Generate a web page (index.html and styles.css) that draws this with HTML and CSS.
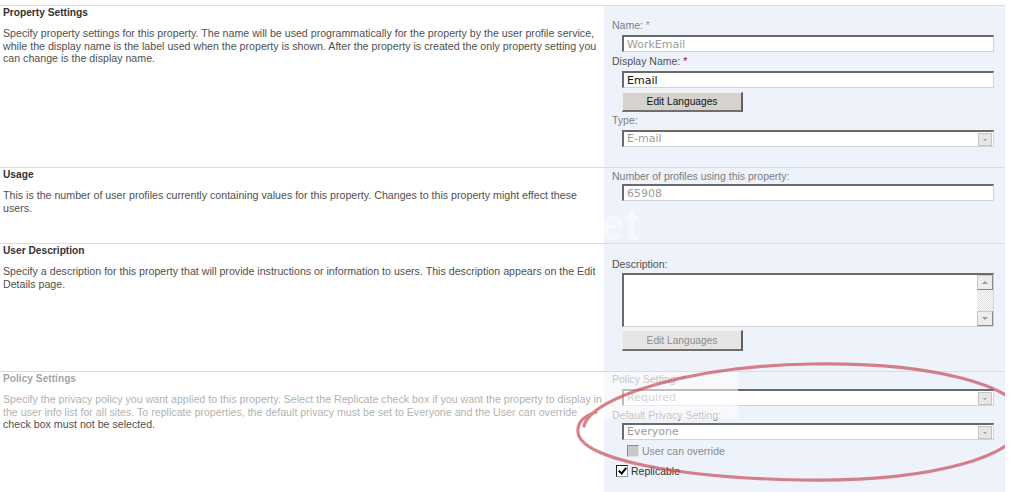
FILE: index.html
```html
<!DOCTYPE html>
<html>
<head>
    <title>Edit User Profile Property</title>
    <link rel="stylesheet" href="styles.css">
</head>
<body>
<div class="page">

    <!-- Property settings -->
    <section class="row">
        <div class="info">
            <h3>Property Settings</h3>
            <p>Specify property settings for this property. The name will be used programmatically for the property by the user profile service, while the display name is the label used when the property is shown. After the property is created the only property setting you can change is the display name.</p>
        </div>
        <div class="fields first">
            <label class="cap">Name: <span class="req off">*</span></label>
            <input class="box" type="text" value="WorkEmail" readonly>
            <label class="cap dark gap">Display Name: <span class="req">*</span></label>
            <input class="box live" type="text" value="Email">
            <button class="btn">Edit Languages</button>
            <label class="cap gap-sm">Type:</label>
            <div class="box select"><span>E-mail</span><i class="drop"></i></div>
        </div>
    </section>

    <!-- Usage -->
    <section class="row">
        <div class="info">
            <h3>Usage</h3>
            <p>This is the number of user profiles currently containing values for this property. Changes to this property might effect these users.</p>
        </div>
        <div class="fields usage">
            <label class="cap">Number of profiles using this property:</label>
            <input class="box tight" type="text" value="65908" readonly>
        </div>
    </section>

    <!-- User description -->
    <section class="row">
        <div class="info">
            <h3>User Description</h3>
            <p>Specify a description for this property that will provide instructions or information to users. This description appears on the Edit Details page.</p>
        </div>
        <div class="fields descr">
            <label class="cap dark">Description:</label>
            <div class="box area">
                <div class="scroll">
                    <i class="sb up"></i>
                    <i class="track"></i>
                    <i class="sb down"></i>
                </div>
            </div>
            <button class="btn off" disabled>Edit Languages</button>
        </div>
    </section>

    <!-- Policy settings -->
    <section class="row">
        <div class="info">
            <h3>Policy Settings</h3>
            <p>Specify the privacy policy you want applied to this property. Select the Replicate check box if you want the property to display in the user info list for all sites. To replicate properties, the default privacy must be set to Everyone and the User can override check box must not be selected.</p>
        </div>
        <div class="fields policy">
            <label class="cap">Policy Setting: <span class="req off">*</span></label>
            <div class="box select"><span>Required</span><i class="drop"></i></div>
            <label class="cap gap">Default Privacy Setting:</label>
            <div class="box select tight"><span>Everyone</span><i class="drop"></i></div>
            <div class="check override"><i class="tick dis"></i>User can override</div>
            <div class="check replic"><i class="tick on"></i>Replicable</div>
        </div>
    </section>

    <!-- washed-out patch and ghost text from the capture -->
    <div class="haze"></div>
    <div class="ghost g1">et</div>

    <!-- red hand drawn ring round the policy fields -->
    <svg class="ring" width="470" height="140" viewBox="0 0 470 140">
        <path d="M12 70 C 20 40, 120 10, 240 8 C 360 6, 450 30, 452 62 C 454 100, 360 126, 230 124 C 110 122, 8 104, 6 76 C 5 66, 12 60, 24 56"
              fill="none" stroke="#c84d58" stroke-width="3.2" stroke-linecap="round" opacity="0.7"/>
    </svg>
</div>
</body>
</html>
```

FILE: styles.css
```css
/* page frame */
body {
    margin: 0;
    background: #fff;
    font-family: 'Liberation Sans', Arial, sans-serif;
    font-size: 10.65px;
    color: #505050;
}
.page {
    position: relative;
    width: 1005px;
    padding-top: 5px;
    height: 487px;
    overflow: hidden;
}
.row {
    display: grid;
    grid-template-columns: 604px 401px;
    border-top: 1px solid #dcdcdc;
}

/* left column: title and help text */
.info {
    padding: 0 0 0 3px;
}
.info h3 {
    margin: 0;
    font-size: 10.2px;
    line-height: 13px;
    color: #333;
}
.info p {
    margin: 8px 0 0;
    line-height: 12.5px;
}

/* right column: the blue panel with the controls */
.fields {
    background: #eef2fb;
    padding: 0 9px 0 8px;
    font-size: 10.5px;
}
.first { padding-top: 13px; padding-bottom: 20px; }
.usage { padding-top: 2px; padding-bottom: 42px; }
.descr { padding-top: 14px; padding-bottom: 20px; }
.policy { padding-top: 1px; padding-bottom: 30px; }

.cap {
    display: block;
    line-height: 12px;
    color: #7d7d7d;
}
.cap.dark { color: #505050; }
.gap { margin-top: 3px; }
.gap-sm { margin-top: 2px; }
.req { color: #a3112a; }
.req.off { color: #9a9a9a; }

.box {
    display: block;
    box-sizing: border-box;
    width: 372px;
    height: 17px;
    margin: 4px 0 0 10px;
    padding: 0 3px;
    border-top: 2px solid #6a6a6a;
    border-left: 2px solid #6a6a6a;
    border-right: 1px solid #d2d2d2;
    border-bottom: 1px solid #d2d2d2;
    background: #fff;
    font-family: 'DejaVu Sans', Verdana, sans-serif;
    font-size: 11px;
    line-height: 14px;
    color: #9c9c9c;
    outline: none;
}
.box.live { color: #111; }
.box.tight { margin-top: 2px; }

.select {
    display: flex;
    align-items: center;
    justify-content: space-between;
    padding-right: 1px;
}
.drop {
    width: 14px;
    height: 13px;
    box-sizing: border-box;
    border: 1px solid #c4c4c4;
    background: #e6e6e6;
    position: relative;
}
.drop::after {
    content: "";
    position: absolute;
    left: 4px;
    top: 5px;
    border-left: 2px solid transparent;
    border-right: 2px solid transparent;
    border-top: 2px solid #a0a0a0;
}

.btn {
    display: block;
    width: 121px;
    height: 20px;
    margin: 4px 0 0 10px;
    padding: 0;
    border-top: 1px solid #f2f0ec;
    border-left: 1px solid #f2f0ec;
    border-right: 2px solid #5f5f5f;
    border-bottom: 2px solid #6f6f6f;
    background: #d6d3ce;
    font-family: 'Liberation Sans', Arial, sans-serif;
    font-size: 10.2px;
    color: #111;
}
.btn.off {
    margin-top: 3px;
    height: 21px;
    background: #e6e5e3;
    color: #8c8c8c;
}

/* textarea with its scrollbar */
.area {
    height: 54px;
    margin-top: 3px;
    padding: 0;
    display: flex;
    justify-content: flex-end;
}
.scroll {
    width: 16px;
    display: flex;
    flex-direction: column;
}
.sb {
    display: block;
    height: 15px;
    box-sizing: border-box;
    border: 1px solid #c8c8c8;
    border-right-color: #8a8a8a;
    border-bottom-color: #8a8a8a;
    background: #ececec;
    position: relative;
}
.sb::after {
    content: "";
    position: absolute;
    left: 4px;
    top: 5px;
    border-left: 3px solid transparent;
    border-right: 3px solid transparent;
}
.sb.up::after { border-bottom: 3px solid #9a9a9a; }
.sb.down::after { border-top: 3px solid #9a9a9a; }
.track {
    flex: 1;
    background: repeating-conic-gradient(#e4e4e4 0 25%, #f6f6f6 0 50%) 0 0 / 2px 2px;
}

/* checkboxes */
.check {
    display: flex;
    align-items: center;
    height: 12px;
    line-height: 12px;
}
.override {
    margin: 5px 0 0 15px;
    color: #8a8a8a;
}
.replic {
    margin: 8px 0 0 4px;
    color: #333;
}
.tick {
    width: 12px;
    height: 12px;
    box-sizing: border-box;
    margin-right: 3px;
    position: relative;
}
.tick.dis {
    background: #c8c8c8;
    border-top: 1px solid #8c8c8c;
    border-left: 1px solid #8c8c8c;
    border-right: 1px solid #e2e2e2;
    border-bottom: 1px solid #e2e2e2;
}
.tick.on {
    background: #fff;
    border: 1px solid #222;
    border-right-color: #999;
    border-bottom-color: #999;
}
.tick.on::after {
    content: "";
    position: absolute;
    left: 3px;
    top: 0;
    width: 3px;
    height: 6px;
    border-right: 2px solid #000;
    border-bottom: 2px solid #000;
    transform: rotate(40deg);
}

/* overlays */
.haze {
    position: absolute;
    left: 0;
    top: 372px;
    width: 738px;
    height: 47px;
    background: rgba(255, 255, 255, 0.55);
}
.ghost {
    position: absolute;
    font-family: 'Liberation Sans', Arial, sans-serif;
    font-weight: bold;
    color: rgba(255, 255, 255, 0.5);
}
.g1 {
    left: 600px;
    top: 200px;
    font-size: 44px;
}
.ring {
    position: absolute;
    left: 572px;
    top: 356px;
}
```
